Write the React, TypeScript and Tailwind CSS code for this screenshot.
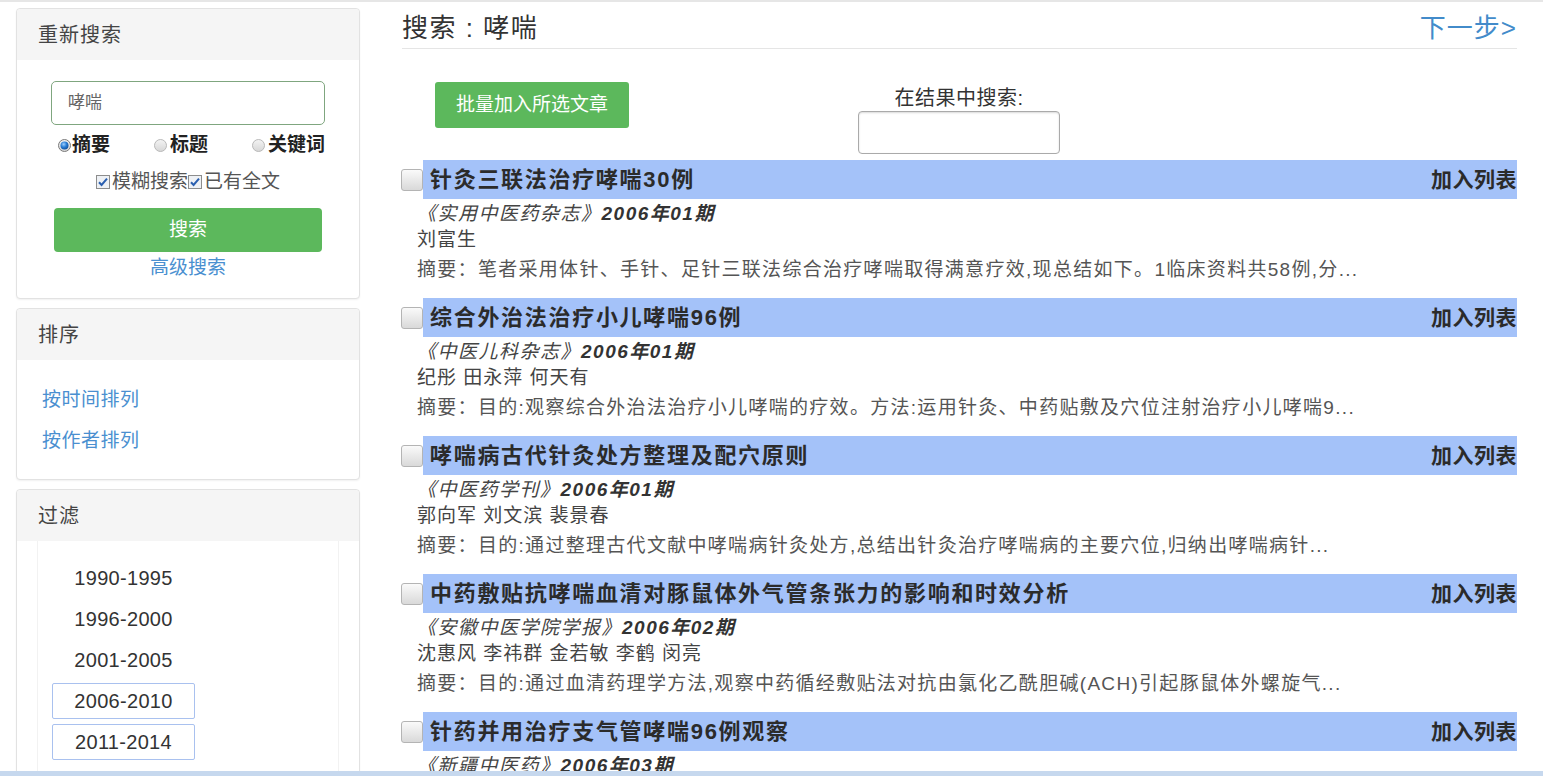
import * as React from "react";

const FONT = "font-['Liberation_Sans','Noto_Sans_CJK_SC',sans-serif]";

const RESULTS: Array<{ title: string; journal: string; year: string; authors: string; abstract: string }> = [
  {
    title: "针灸三联法治疗哮喘30例",
    journal: "《实用中医药杂志》",
    year: "2006年01期",
    authors: "刘富生",
    abstract: "摘要：笔者采用体针、手针、足针三联法综合治疗哮喘取得满意疗效,现总结如下。1临床资料共58例,分...",
  },
  {
    title: "综合外治法治疗小儿哮喘96例",
    journal: "《中医儿科杂志》",
    year: "2006年01期",
    authors: "纪彤 田永萍 何天有",
    abstract: "摘要：目的:观察综合外治法治疗小儿哮喘的疗效。方法:运用针灸、中药贴敷及穴位注射治疗小儿哮喘9...",
  },
  {
    title: "哮喘病古代针灸处方整理及配穴原则",
    journal: "《中医药学刊》",
    year: "2006年01期",
    authors: "郭向军 刘文滨 裴景春",
    abstract: "摘要：目的:通过整理古代文献中哮喘病针灸处方,总结出针灸治疗哮喘病的主要穴位,归纳出哮喘病针...",
  },
  {
    title: "中药敷贴抗哮喘血清对豚鼠体外气管条张力的影响和时效分析",
    journal: "《安徽中医学院学报》",
    year: "2006年02期",
    authors: "沈惠风 李祎群 金若敏 李鹤 闵亮",
    abstract: "摘要：目的:通过血清药理学方法,观察中药循经敷贴法对抗由氯化乙酰胆碱(ACH)引起豚鼠体外螺旋气...",
  },
  {
    title: "针药并用治疗支气管哮喘96例观察",
    journal: "《新疆中医药》",
    year: "2006年03期",
    authors: "吴春华 马晓丽",
    abstract: "摘要：目的:观察针药并用治疗支气管哮喘的临床疗效。方法:将96例患者随机分为两组...",
  },
];

const YEARS = [
  { label: "1990-1995", boxed: false },
  { label: "1996-2000", boxed: false },
  { label: "2001-2005", boxed: false },
  { label: "2006-2010", boxed: true },
  { label: "2011-2014", boxed: true },
];

function Radio({ checked }: { checked?: boolean }) {
  return (
    <svg width="13" height="13" viewBox="0 0 13 13" className="shrink-0">
      <defs>
        <radialGradient id="rOn" cx="0.4" cy="0.35" r="0.7">
          <stop offset="0" stopColor="#9fd0ff" />
          <stop offset="0.5" stopColor="#2a7fd6" />
          <stop offset="1" stopColor="#0d4d9a" />
        </radialGradient>
        <linearGradient id="rOff" x1="0" y1="0" x2="0" y2="1">
          <stop offset="0" stopColor="#f4f4f4" />
          <stop offset="1" stopColor="#d6d6d6" />
        </linearGradient>
      </defs>
      <circle cx="6.5" cy="6.5" r="6" fill="url(#rOff)" stroke={checked ? "#7a7a7a" : "#b9b9b9"} />
      {checked && <circle cx="6.5" cy="6.5" r="4" fill="url(#rOn)" />}
    </svg>
  );
}

function SmallCheck() {
  return (
    <svg width="14" height="14" viewBox="0 0 14 14" className="shrink-0">
      <rect x="0.5" y="0.5" width="13" height="13" fill="#eef1f5" stroke="#8d8d8d" />
      <path d="M3 7.2 L5.6 10 L11 3.6" fill="none" stroke="#2a5fb0" strokeWidth="2" />
    </svg>
  );
}

function Panel({ title, children, className }: { title: string; children: React.ReactNode; className?: string }) {
  return (
    <div className={`rounded-[4px] border border-[#e2e2e2] bg-white shadow-[0_1px_2px_rgba(0,0,0,0.06)] ${className ?? ""}`}>
      <div className="flex h-[51px] items-center rounded-t-[4px] bg-[#f5f5f5] pl-[21px] text-[20px] tracking-[1px] text-[#444]">
        {title}
      </div>
      {children}
    </div>
  );
}

function ResultRow({ r }: { r: (typeof RESULTS)[number] }) {
  return (
    <div className="h-[138px]">
      <div className="flex items-center">
        <span className="-ml-px h-[22px] w-[22px] shrink-0 rounded-[3px] border border-[#b4b4b4] bg-gradient-to-b from-[#fafafa] to-[#d9d9d9]" />
        <div className="flex h-[39px] flex-1 items-center justify-between bg-[#a4c2f9] pl-[7px] text-[22px] font-bold text-[#2b2b2b]">
          <span className="tracking-[1.7px]">{r.title}</span>
          <span className="text-[21px] tracking-[0.5px]">加入列表</span>
        </div>
      </div>
      <div className="pl-[15px] pt-[2px] text-[19px] leading-[26px]">
        <div className="italic tracking-[1.5px] text-[#333]">
          <span className="text-[#444]">{r.journal}</span>
          <span className="font-semibold">{r.year}</span>
        </div>
        <div className="tracking-[1px] text-[#444]">{r.authors}</div>
        <div className="mt-[4px] tracking-[1.3px] text-[#555]">{r.abstract}</div>
      </div>
    </div>
  );
}

export default function App() {
  return (
    <div className={`${FONT} min-h-screen overflow-hidden border-t-2 border-[#e6e6e6] bg-white text-[#333]`}>
      <div className="flex pl-[16px]">
        {/* sidebar */}
        <div className="flex w-[344px] shrink-0 flex-col gap-[9px] pt-[6px]">
          <Panel title="重新搜索" className="h-[291px]">
            <div className="px-[34px] pt-[21px]">
              <div className="flex h-[44px] items-center rounded-[5px] border border-[#7fa67f] pl-[16px] text-[17px] text-[#666]">
                哮喘
              </div>
              <div className="mt-[6px] flex items-center justify-between pl-[7px] text-[19px] font-bold text-[#222]">
                <label className="flex items-center gap-[1px]"><Radio checked />摘要</label>
                <label className="flex items-center gap-[3px]"><Radio />标题</label>
                <label className="flex items-center gap-[3px]"><Radio />关键词</label>
              </div>
              <div className="mt-[8px] flex items-center justify-center text-[19px] text-[#555]">
                <SmallCheck />
                <span className="ml-[2px]">模糊搜索</span>
                <SmallCheck />
                <span className="ml-[2px]">已有全文</span>
              </div>
              <div className="mx-[3px] mt-[12px] flex h-[44px] items-center justify-center rounded-[4px] bg-[#5cb85c] text-[19px] text-white">
                搜索
              </div>
              <div className="mt-[2px] text-center text-[19px] text-[#4a8fd0]">高级搜索</div>
            </div>
          </Panel>
          <Panel title="排序" className="h-[172px]">
            <div className="flex flex-col gap-[14px] pl-[25px] pt-[26px] text-[19px] leading-[27px] tracking-[0.5px] text-[#4a8fd0]">
              <span>按时间排列</span>
              <span>按作者排列</span>
            </div>
          </Panel>
          <Panel title="过滤" className="h-[320px]">
            <div className="mx-[20px] flex h-full flex-col gap-[5px] border border-t-0 border-[#f2f2f2] pl-[14px] pt-[19px]">
              {YEARS.map((y) => (
                <div
                  key={y.label}
                  className={`flex h-[36px] w-[143px] items-center justify-center rounded-[2px] border text-[20px] tracking-[0.3px] text-[#333] ${
                    y.boxed ? "border-[#a9c1ef]" : "border-transparent"
                  }`}
                >
                  {y.label}
                </div>
              ))}
            </div>
          </Panel>
        </div>

        {/* main */}
        <div className="ml-[42px] w-[1115px] shrink-0">
          <div className="flex h-[47px] items-center justify-between border-b border-[#e5e5e5] pt-[6px] text-[26px]">
            <span className="tracking-[1.5px] text-[#333]">搜索 : 哮喘</span>
            <span className="tracking-[1px] text-[#428bca]">下一步&gt;</span>
          </div>
          <div className="mt-[33px] flex items-start pl-[33px]">
            <div className="flex h-[46px] w-[194px] items-center justify-center rounded-[3px] bg-[#5cb85c] text-[19px] text-white">
              批量加入所选文章
            </div>
            <div className="ml-[229px] mt-[4px] flex w-[202px] flex-col items-center">
              <span className="text-[20px] leading-[24px] tracking-[0.5px] text-[#333]">在结果中搜索:</span>
              <div className="mt-[1px] h-[43px] w-[202px] rounded-[4px] border border-[#aaa] shadow-[inset_0_1px_2px_rgba(0,0,0,0.15)]" />
            </div>
          </div>
          <div className="mt-[6px]">
            {RESULTS.map((r) => (
              <ResultRow key={r.title} r={r} />
            ))}
          </div>
        </div>
      </div>
      <div className="fixed bottom-0 left-0 h-[5px] w-full bg-[#c6d8ee]" />
    </div>
  );
}
